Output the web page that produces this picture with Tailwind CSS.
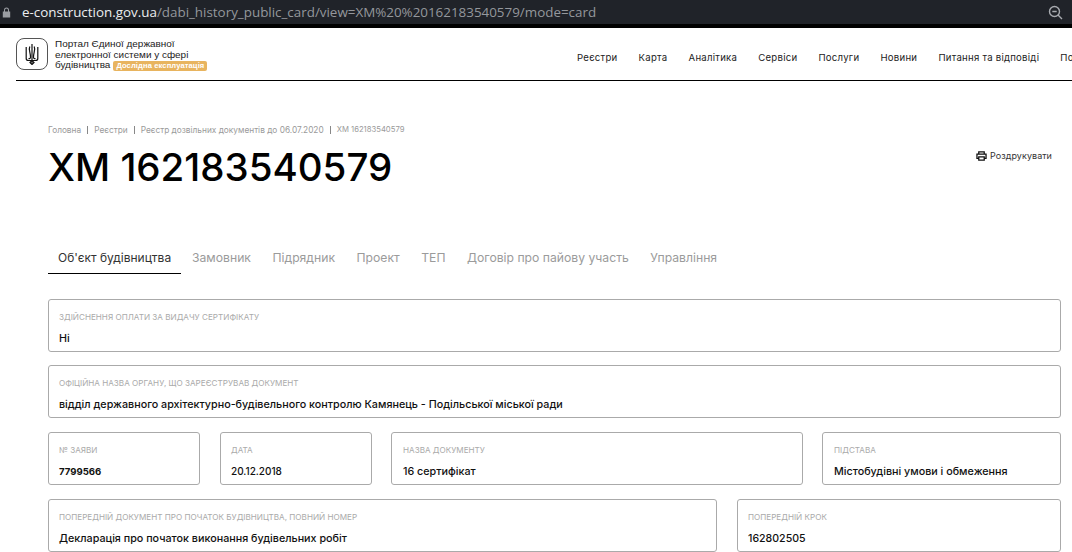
<!DOCTYPE html>
<html lang="uk">
<head>
<meta charset="utf-8">
<script src="https://cdn.jsdelivr.net/npm/@tailwindcss/browser@4"></script>
<title>XM 162183540579</title>
</head>
<body class="bg-white font-['Inter',sans-serif] overflow-hidden">
<div class="w-[1072px] h-[552px] overflow-hidden flex flex-col">
  <div class="h-6 bg-[#202329] flex items-center shrink-0 pl-[2px] pr-[9px]">
    <svg class="w-[9px] h-[11px] text-[#9a9da2]" viewBox="0 0 9 11" fill="currentColor"><path d="M2 4.5V3a2.5 2.5 0 0 1 5 0v1.5h1.2v6H.8v-6zm1 0h3V3a1.5 1.5 0 0 0-3 0z"/></svg>
    <div class="ml-[11px] text-[13.4px] leading-6 font-['Open_Sans',sans-serif] text-[#94979c] whitespace-nowrap"><span class="text-[#eceef0]">e-construction.gov.ua</span>/dabi_history_public_card/view=XM%20%20162183540579/mode=card</div>
    <svg class="ml-auto w-[15px] h-[15px] text-[#a8abb0]" viewBox="0 0 15 15" fill="none" stroke="currentColor" stroke-width="1.4"><circle cx="6.5" cy="6.5" r="5"/><path d="M10 10l4 4M4.3 6.5h4.4"/></svg>
  </div>
  <div class="h-1 bg-black shrink-0"></div>
  <header class="mx-4 h-[53px] border-b border-black flex items-center shrink-0 relative w-[1056px]">
    <div class="w-[32px] h-[32px] border border-[#555] rounded-lg flex items-center justify-center shrink-0">
      <svg class="w-[14px] h-[22px]" viewBox="0 0 14 22" fill="none" stroke="#111" stroke-width="1.2"><path d="M7 1v19"/><path d="M1.200 4v11.500c0 1.500 1 2 2.300 2H7M12.800 4v11.500c0 1.500-1 2-2.300 2H7"/><path d="M4.800 3.500c-1.500 3 .7 6 .7 10.500 0 1.500-1 2-2 1.500M9.200 3.500c1.500 3-.7 6-.7 10.500 0 1.500 1 2 2 1.500"/><path d="M7 17.500l-2 2L7 21.500l2-2z"/></svg>
    </div>
    <div class="ml-[7px] mt-[2px] text-[9.950px] leading-[10.800px] text-[#222] font-['Liberation_Sans',sans-serif] whitespace-nowrap">
      <div>Портал Єдиної державної</div>
      <div>електронної системи у сфері</div>
      <div class="flex items-center">будівництва<span class="ml-[3px] h-[10px] px-[3px] rounded-[2px] bg-[#e8b45f] text-white text-[7.600px] leading-[10px] font-bold tracking-[0.1px]">Дослідна експлуатація</span></div>
    </div>
    <nav class="absolute left-[561px] top-[24px] flex gap-[21.100px] text-[9.600px] leading-[12px] tracking-[0.25px] text-[#222] whitespace-nowrap">
      <a>Реєстри</a><a>Карта</a><a>Аналітика</a><a>Сервіси</a><a>Послуги</a><a>Новини</a><a>Питання та відповіді</a><a>Пошук</a>
    </nav>
  </header>
  <main class="px-12 flex flex-col flex-1">
    <div class="mt-[44px] flex items-center text-[8.300px] leading-[10px] text-[#9a9a9a] whitespace-nowrap">
      <span>Головна</span><span class="mx-[6px] h-2 w-px bg-[#888]"></span><span>Реєстри</span><span class="mx-[6px] h-2 w-px bg-[#888]"></span><span>Реєстр дозвільних документів до 06.07.2020</span><span class="mx-[6px] h-2 w-px bg-[#888]"></span><span class="text-[7.700px]">ХМ 162183540579</span>
    </div>
    <div class="mt-[12px] flex justify-between">
      <h1 class="text-[38.500px] leading-[40px] text-black font-medium whitespace-nowrap">ХМ 162183540579</h1>
      <div class="flex items-center h-[10px] mt-[4px] mr-[-28px] text-[9px] tracking-[0.05px] text-[#333]">
        <svg class="w-[11px] h-[10px] mr-[3px]" viewBox="0 0 12 11" fill="none" stroke="#111" stroke-width="1.400"><path d="M3 3V1h6v2M3 8H1V3.500h10V8H9M3 6.500h6V10H3z"/></svg>
        Роздрукувати
      </div>
    </div>
    <div class="mt-[63px] flex text-[12.200px] leading-[16px] text-[#9b9b9b] whitespace-nowrap">
      <a class="pl-[10px] h-[24px] w-[133px] border-b border-black text-[#333] text-[12px]">Об'єкт будівництва</a>
      <a class="ml-[11px]">Замовник</a><a class="ml-[21.500px]">Підрядник</a><a class="ml-[21.500px]">Проект</a><a class="ml-[21.500px]">ТЕП</a><a class="ml-[21.500px]">Договір про пайову участь</a><a class="ml-[21.500px]">Управління</a>
    </div>
    <div class="mt-[25px] flex flex-col gap-[13px] w-[1013px]">
      <div class="h-[53px] border border-[#aaa] rounded-[3px] px-[10px] pt-[12px]">
        <div class="text-[8.150px] leading-[10px] text-[#aaa] uppercase">Здійснення оплати за видачу сертифікату</div>
        <div class="mt-[10px] text-[10.750px] leading-[13px] text-[#111] font-medium">Ні</div>
      </div>
      <div class="h-[53px] border border-[#aaa] rounded-[3px] px-[10px] pt-[12px]">
        <div class="text-[8.150px] leading-[10px] text-[#aaa] uppercase">Офіційна назва органу, що зареєстрував документ</div>
        <div class="mt-[10px] text-[10.750px] leading-[13px] text-[#111] font-medium">відділ державного архітектурно-будівельного контролю Камянець - Подільської міської ради</div>
      </div>
      <div class="flex mt-[1px]">
        <div class="w-[152px] h-[53px] border border-[#aaa] rounded-[3px] px-[10px] pt-[12px]">
          <div class="text-[8.150px] leading-[10px] text-[#aaa] uppercase">№ заяви</div>
          <div class="mt-[10px] text-[9.600px] leading-[13px] text-[#111] font-bold">7799566</div>
        </div>
        <div class="ml-[20px] w-[152px] h-[53px] border border-[#aaa] rounded-[3px] px-[10px] pt-[12px]">
          <div class="text-[8.150px] leading-[10px] text-[#aaa] uppercase">Дата</div>
          <div class="mt-[10px] text-[10px] leading-[13px] text-[#111] font-medium">20.12.2018</div>
        </div>
        <div class="ml-[19px] w-[412px] h-[53px] border border-[#aaa] rounded-[3px] px-[11px] pt-[12px]">
          <div class="text-[8.150px] leading-[10px] text-[#aaa] uppercase">Назва документу</div>
          <div class="mt-[10px] text-[10.750px] leading-[13px] text-[#111] font-medium">16 сертифікат</div>
        </div>
        <div class="ml-[19px] w-[239px] h-[53px] border border-[#aaa] rounded-[3px] px-[11px] pt-[12px]">
          <div class="text-[8.150px] leading-[10px] text-[#aaa] uppercase">Підстава</div>
          <div class="mt-[10px] text-[10.750px] leading-[13px] text-[#111] font-medium">Містобудівні умови і обмеження</div>
        </div>
      </div>
      <div class="flex justify-between mt-[1px]">
        <div class="w-[669px] h-[53px] border border-[#aaa] rounded-[3px] px-[10px] pt-[12px]">
          <div class="text-[8.150px] leading-[10px] text-[#aaa] uppercase">Попередній документ про початок будівництва, повний номер</div>
          <div class="mt-[10px] text-[10.750px] leading-[13px] text-[#111] font-medium">Декларація про початок виконання будівельних робіт</div>
        </div>
        <div class="w-[324px] h-[53px] border border-[#aaa] rounded-[3px] px-[10px] pt-[12px]">
          <div class="text-[8.150px] leading-[10px] text-[#aaa] uppercase">Попередній крок</div>
          <div class="mt-[10px] text-[10.600px] leading-[13px] text-[#111] font-medium">162802505</div>
        </div>
      </div>
    </div>
  </main>
</div>
</body>
</html>
